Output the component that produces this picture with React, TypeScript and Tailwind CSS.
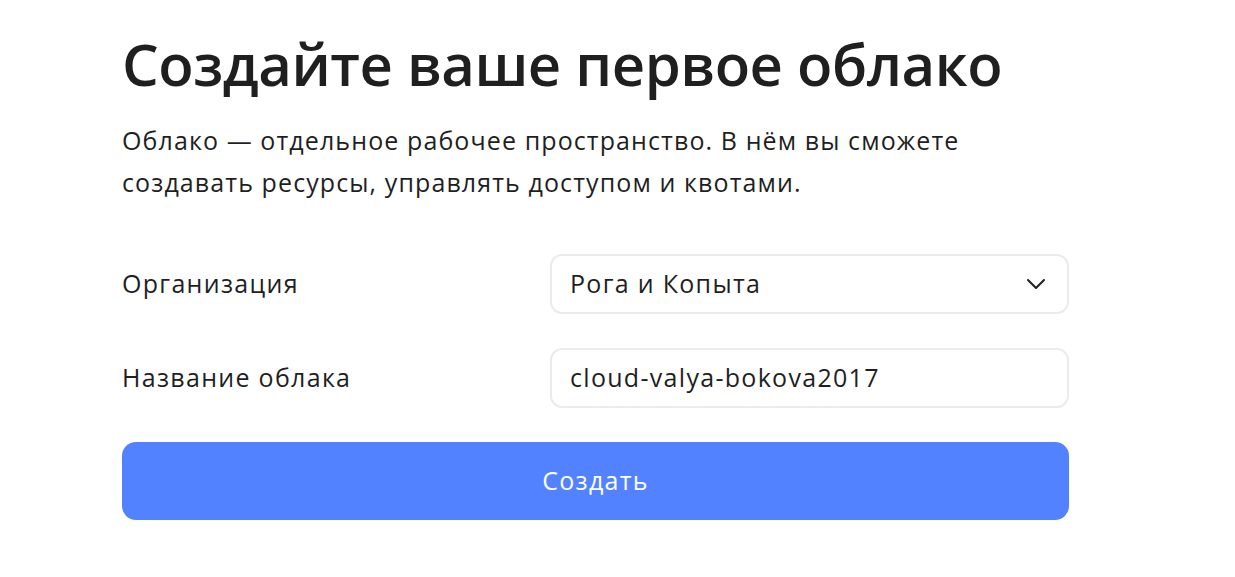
export default function App() {
  return (
    <div className="min-h-[577px] bg-white font-['Open_Sans',sans-serif] text-[#1f1f1f]">
      <div className="ml-[122px] w-[947px] pt-[26px]">
        <h1 className="text-[58px] font-semibold leading-[76px] tracking-[-0.5px]">Создайте ваше первое облако</h1>
        <p className="mt-[17px] text-[25px] leading-[42px] tracking-[1.1px]">
          Облако — отдельное рабочее пространство. В нём вы сможете
          <br />
          создавать ресурсы, управлять доступом и квотами.
        </p>
        <div className="mt-[51px] flex flex-col gap-[34px] text-[25px] tracking-[1.3px]">
          <div className="flex items-center">
            <div className="w-[428px]">Организация</div>
            <div className="flex h-[60px] flex-1 items-center justify-between rounded-[12px] border-2 border-[#ebebeb] pl-[18px] pr-[20px]">
              <span>Рога и Копыта</span>
              <svg width="22" height="22" viewBox="0 0 22 22" fill="none">
                <path d="M3 7l8 8 8-8" stroke="#1f1f1f" strokeWidth="2" strokeLinecap="round" strokeLinejoin="round" />
              </svg>
            </div>
          </div>
          <div className="flex items-center">
            <div className="w-[428px]">Название облака</div>
            <div className="flex h-[60px] flex-1 items-center rounded-[12px] border-2 border-[#ebebeb] pl-[18px]">
              cloud-valya-bokova2017
            </div>
          </div>
          <button className="h-[78px] w-full rounded-[14px] bg-[#5282ff] text-white">Создать</button>
        </div>
      </div>
    </div>
  )
}
